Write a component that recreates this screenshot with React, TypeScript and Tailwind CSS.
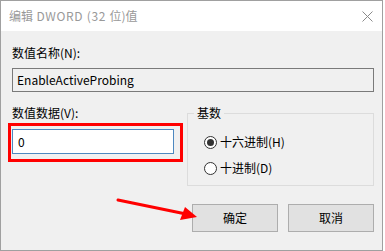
import React from "react";

const font = { fontFamily: '"Noto Sans CJK SC", "Noto Sans", sans-serif' };

function Radio({ checked, label }: { checked?: boolean; label: string }) {
  return (
    <div className="flex items-center h-[16px]">
      <span className="w-[13px] h-[13px] rounded-full border border-[#333] bg-white flex items-center justify-center">
        {checked && <span className="w-[7px] h-[7px] rounded-full bg-[#333]" />}
      </span>
      <span className="ml-[3px] text-[12px] leading-[16px] text-black">{label}</span>
    </div>
  );
}

export default function App() {
  return (
    <div className="w-[385px] h-[251px] bg-white relative overflow-hidden" style={font}>
      <div className="w-[383px] h-[251px] border border-[#a0a0a0] flex flex-col">
        {/* title bar */}
        <div className="h-[30px] bg-white flex items-center justify-between pl-[8px] pr-[9px] shrink-0">
          <span className="text-[12px] text-[#999]">
            编辑<span className="tracking-[0.7px]"> DWORD (32 </span>位)值
          </span>
          <svg width="11" height="11" viewBox="0 0 11 11">
            <path d="M0.5 0.5 L10.5 10.5 M10.5 0.5 L0.5 10.5" stroke="#8a8a8a" strokeWidth="1" />
          </svg>
        </div>

        {/* body */}
        <div className="flex-1 bg-[#f0f0f0] pl-[11px] pr-[8px] pt-[14px] relative">
          <div className="text-[12px] leading-[16px] text-black">数值名称(N):</div>
          <div className="mt-[7px] w-[362px] h-[24px] border border-[#7a7a7a] bg-[#f0f0f0] flex items-center pl-[4px] text-[12px] text-black">
            EnableActiveProbing
          </div>

          <div className="mt-[13px] flex">
            <div className="w-[175px]">
              <div className="text-[12px] leading-[16px] text-black">数值数据(V):</div>
              <div className="mt-[8px] w-[162px] h-[25px] border border-[#4e88c0] bg-white flex items-center pl-[5px] text-[12px] text-black">
                0
              </div>
            </div>
            <fieldset className="w-[187px] h-[81px] border border-[#dcdcdc]">
              <legend className="ml-[6px] px-[3px] text-[12px] leading-[16px] text-black">基数</legend>
              <div className="mt-[13px] pl-[16px] flex flex-col gap-[10px]">
                <Radio checked label="十六进制(H)" />
                <Radio label="十进制(D)" />
              </div>
            </fieldset>
          </div>

          <div className="mt-[18px] flex justify-end gap-[10px]">
            <button className="w-[86px] h-[28px] border border-[#adadad] bg-[#e1e1e1] text-[12px] text-black">确定</button>
            <button className="w-[86px] h-[28px] border border-[#adadad] bg-[#e1e1e1] text-[12px] text-black">取消</button>
          </div>
        </div>
      </div>

      {/* annotations */}
      <div className="absolute left-[8px] top-[123px] w-[175px] h-[39px] border-[3px] border-[#ff0000]" />
      <svg className="absolute left-0 top-0" width="385" height="251">
        <line x1="118" y1="200" x2="186" y2="214" stroke="#ff0000" strokeWidth="3" strokeLinecap="round" />
        <path d="M197 217 L180 220 L185 207 Z" fill="#ff0000" />
      </svg>
    </div>
  );
}
